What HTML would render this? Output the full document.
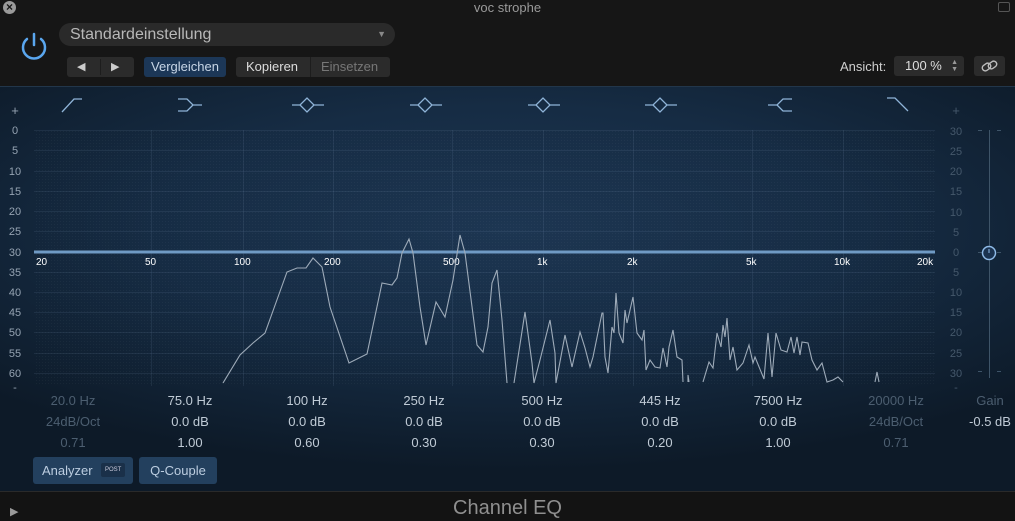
<!DOCTYPE html>
<html><head><meta charset="utf-8"><style>
*{margin:0;padding:0;box-sizing:border-box}
body{width:1015px;height:521px;overflow:hidden;background:#141414;font-family:"Liberation Sans",sans-serif;position:relative}
.abs{position:absolute}
.top{left:0;top:0;width:1015px;height:86px;background:#161616}
.title{left:0;top:0;width:1015px;text-align:center;color:#9a9a9a;font-size:13px;top:0}
.eq{left:0;top:86px;width:1015px;height:405px;background:radial-gradient(ellipse 70% 60% at 50% 35%,#1d3652 0%,#162c44 50%,#0d1a28 100%);border-top:1px solid #22364a}
.bot{left:0;top:491px;width:1015px;height:30px;background:#131313;border-top:1px solid #2a2a2a}
.btn{background:#2b2b2b;border-radius:3px;color:#ddd;font-size:13px;text-align:center;line-height:20px;height:20px}
.p{font-size:13px;color:#c0cbd6;text-align:center;width:90px}
.d{color:#4c5e70}
</style></head><body>
<div class="abs top"></div>
<div class="abs title">voc strophe</div>
<div class="abs" style="left:3px;top:1px;width:13px;height:13px;border-radius:50%;background:#9a9a9a;color:#161616;font-size:12px;line-height:13px;text-align:center;font-weight:bold">×</div>
<div class="abs" style="left:998px;top:2px;width:12px;height:10px;border:1px solid #555;border-radius:2px"></div>
<svg class="abs" style="left:18px;top:30px" width="32" height="32" viewBox="0 0 32 32"><path d="M9 9 A11 11 0 1 0 23 9" fill="none" stroke="#5aa6ee" stroke-width="2.5" stroke-linecap="round"/><line x1="16" y1="4" x2="16" y2="15" stroke="#5aa6ee" stroke-width="2.5" stroke-linecap="round"/></svg>
<div class="abs" style="left:59px;top:23px;width:336px;height:23px;border-radius:12px;background:#2a2a2a;color:#b8b8b8;font-size:16px;line-height:23px;padding-left:11px">Standardeinstellung<span style="position:absolute;right:9px;font-size:9px;color:#888">▼</span></div>
<div class="abs btn" style="left:67px;top:57px;width:67px;color:#ccc;font-size:11px"><span style="position:absolute;left:10px">◀</span><span style="position:absolute;left:33px;top:2px;height:16px;border-left:1px solid #1d1d1d"></span><span style="position:absolute;left:44px">▶</span></div>
<div class="abs btn" style="left:144px;top:57px;width:82px;background:#1c3757;color:#c8d6e6">Vergleichen</div>
<div class="abs btn" style="left:236px;top:57px;width:154px;text-align:left"><span style="padding-left:10px;color:#ddd">Kopieren</span><span style="position:absolute;left:74px;top:0;height:20px;border-left:1px solid #1d1d1d"></span><span style="position:absolute;left:85px;color:#777">Einsetzen</span></div>
<div class="abs" style="left:840px;top:59px;color:#cfcfcf;font-size:13px">Ansicht:</div>
<div class="abs btn" style="left:894px;top:56px;width:70px;text-align:left;padding-left:11px;color:#ddd">100 %<span style="position:absolute;right:6px;font-size:7px;line-height:7px;top:3px;color:#999">▲<br>▼</span></div>
<div class="abs btn" style="left:974px;top:56px;width:31px"><svg width="31" height="20" viewBox="0 0 31 20"><g fill="none" stroke="#bbb" stroke-width="1.4"><rect x="8" y="8" width="9" height="6" rx="3" transform="rotate(-35 12.5 11)"/><rect x="14" y="6" width="9" height="6" rx="3" transform="rotate(-35 18.5 9)"/></g></svg></div>
<div class="abs eq"></div>
<svg class="abs" style="left:0;top:86px" width="1015" height="405">
<defs><pattern id="g" width="3" height="3" patternUnits="userSpaceOnUse"><rect width="1" height="1" fill="rgba(255,255,255,0.035)"/></pattern></defs>
<rect x="34" y="44" width="901" height="256" fill="url(#g)"/>
<g stroke="rgba(130,160,190,0.12)" stroke-width="1">
<line x1="34" y1="44.5" x2="935" y2="44.5"/><line x1="34" y1="64.5" x2="935" y2="64.5"/><line x1="34" y1="85.5" x2="935" y2="85.5"/><line x1="34" y1="105.5" x2="935" y2="105.5"/><line x1="34" y1="125.5" x2="935" y2="125.5"/><line x1="34" y1="145.5" x2="935" y2="145.5"/><line x1="34" y1="186.5" x2="935" y2="186.5"/><line x1="34" y1="206.5" x2="935" y2="206.5"/><line x1="34" y1="226.5" x2="935" y2="226.5"/><line x1="34" y1="246.5" x2="935" y2="246.5"/><line x1="34" y1="267.5" x2="935" y2="267.5"/><line x1="34" y1="287.5" x2="935" y2="287.5"/>
<line x1="151.5" y1="44" x2="151.5" y2="300"/><line x1="243.5" y1="44" x2="243.5" y2="300"/><line x1="333.5" y1="44" x2="333.5" y2="300"/><line x1="452.5" y1="44" x2="452.5" y2="300"/><line x1="543.5" y1="44" x2="543.5" y2="300"/><line x1="633.5" y1="44" x2="633.5" y2="300"/><line x1="752.5" y1="44" x2="752.5" y2="300"/><line x1="843.5" y1="44" x2="843.5" y2="300"/>
</g>
<line x1="34" y1="166" x2="935" y2="166" stroke="#6f9ac4" stroke-width="3"/>
<g fill="#fff" font-size="10" font-family="Liberation Sans">
<text x="36" y="179">20</text><text x="145" y="179">50</text><text x="234" y="179">100</text><text x="324" y="179">200</text><text x="443" y="179">500</text><text x="537" y="179">1k</text><text x="627" y="179">2k</text><text x="746" y="179">5k</text><text x="834" y="179">10k</text><text x="917" y="179">20k</text></g>
<g fill="none" stroke="#9eabb9" stroke-width="1.1" transform="translate(0,-86)">
<polyline points="223,383 240,355 253,343 265,333 287,272 297,268 306,268 313,258 322,267 330,307 349,363 367,354 382,283 392,285 397,278 402,253 409,239 413,253 420,307 426,345 436,302 445,317 453,280 460,235 465,253 477,345 483,352 488,327 492,283 497,270 502,320 507,383"/>
<polyline points="514,383 525,312 532,363 534,383 540,360 550,320 555,353 556,383 565,335 572,367 580,332 585,348 590,367 593,357 602,313 603,313 605,357 608,373 612,327 614,333 616,293 619,333 623,343 625,310 627,323 633,297 637,333 642,340 644,330 646,370 650,360 655,367 660,368 663,348 667,367 669,347 673,330 677,357 682,360 683,382"/>
<polyline points="688,382 688,375 689,382"/>
<polyline points="703,382 709,362 713,368 717,333 721,347 723,325 725,337 727,318 730,360 733,347 737,370 743,363 749,345 753,363 755,357 764,379 768,333 772,377 776,333 781,350 787,352 791,337 794,353 797,337 800,355 802,342 808,343 812,360 817,370 822,363 827,382 833,380 838,377 843,382"/>
<polyline points="875,382 877,372 879,382"/>
</g>
<g fill="none" stroke="#8fb4d8" stroke-width="1.3">
<path d="M62 26 L74 13 L82 13"/>
<path d="M178 13 L187 13 L193 19 L202 19 M178 25 L187 25 L193 19"/>
<path d="M292 19 L300 19 L307 12 L314 19 L307 26 L300 19 M314 19 L324 19"/>
<path d="M410 19 L418 19 L425 12 L432 19 L425 26 L418 19 M432 19 L442 19"/>
<path d="M528 19 L536 19 L543 12 L550 19 L543 26 L536 19 M550 19 L560 19"/>
<path d="M645 19 L653 19 L660 12 L667 19 L660 26 L653 19 M667 19 L677 19"/>
<path d="M768 19 L777 19 L783 13 L792 13 M777 19 L783 25 L792 25"/>
<path d="M887 12 L895 12 L908 25"/>
</g>
<g fill="#95a3b2" font-size="11" font-family="Liberation Sans" text-anchor="middle">
<text x="15" y="29" font-size="13">+</text><text x="15" y="48">0</text><text x="15" y="68">5</text><text x="15" y="89">10</text><text x="15" y="109">15</text><text x="15" y="129">20</text><text x="15" y="149">25</text><text x="15" y="170">30</text><text x="15" y="190">35</text><text x="15" y="210">40</text><text x="15" y="230">45</text><text x="15" y="250">50</text><text x="15" y="271">55</text><text x="15" y="291">60</text><text x="15" y="305">-</text>
</g>
<g fill="#45586b" font-size="11" font-family="Liberation Sans" text-anchor="middle">
<text x="956" y="29" font-size="13">+</text><text x="956" y="49">30</text><text x="956" y="69">25</text><text x="956" y="89">20</text><text x="956" y="109">15</text><text x="956" y="130">10</text><text x="956" y="150">5</text><text x="956" y="170">0</text><text x="956" y="190">5</text><text x="956" y="210">10</text><text x="956" y="230">15</text><text x="956" y="250">20</text><text x="956" y="271">25</text><text x="956" y="291">30</text><text x="956" y="305">-</text>
</g>
<line x1="989.5" y1="44" x2="989.5" y2="292" stroke="#3e5468"/>
<g stroke="#3e5468"><line x1="978" y1="44.5" x2="982" y2="44.5"/><line x1="997" y1="44.5" x2="1001" y2="44.5"/><line x1="978" y1="166.5" x2="982" y2="166.5"/><line x1="997" y1="166.5" x2="1001" y2="166.5"/><line x1="978" y1="285.5" x2="982" y2="285.5"/><line x1="997" y1="285.5" x2="1001" y2="285.5"/></g>
<circle cx="989" cy="167" r="6.5" fill="#1b3350" stroke="#8fbbe8" stroke-width="1.5"/>
<line x1="989" y1="163" x2="989" y2="167" stroke="#8fbbe8"/>
</svg>
<div class="abs p d" style="left:28px;top:393px">20.0 Hz</div>
<div class="abs p d" style="left:18px;top:414px;width:110px">24dB/Oct</div>
<div class="abs p d" style="left:28px;top:435px">0.71</div>
<div class="abs p" style="left:145px;top:393px">75.0 Hz</div><div class="abs p" style="left:145px;top:414px">0.0 dB</div><div class="abs p" style="left:145px;top:435px">1.00</div>
<div class="abs p" style="left:262px;top:393px">100 Hz</div><div class="abs p" style="left:262px;top:414px">0.0 dB</div><div class="abs p" style="left:262px;top:435px">0.60</div>
<div class="abs p" style="left:379px;top:393px">250 Hz</div><div class="abs p" style="left:379px;top:414px">0.0 dB</div><div class="abs p" style="left:379px;top:435px">0.30</div>
<div class="abs p" style="left:497px;top:393px">500 Hz</div><div class="abs p" style="left:497px;top:414px">0.0 dB</div><div class="abs p" style="left:497px;top:435px">0.30</div>
<div class="abs p" style="left:615px;top:393px">445 Hz</div><div class="abs p" style="left:615px;top:414px">0.0 dB</div><div class="abs p" style="left:615px;top:435px">0.20</div>
<div class="abs p" style="left:733px;top:393px">7500 Hz</div><div class="abs p" style="left:733px;top:414px">0.0 dB</div><div class="abs p" style="left:733px;top:435px">1.00</div>
<div class="abs p d" style="left:851px;top:393px">20000 Hz</div>
<div class="abs p d" style="left:841px;top:414px;width:110px">24dB/Oct</div>
<div class="abs p d" style="left:851px;top:435px">0.71</div>
<div class="abs p d" style="left:945px;top:393px">Gain</div>
<div class="abs p" style="left:945px;top:414px">-0.5 dB</div>
<div class="abs" style="left:33px;top:457px;width:100px;height:27px;background:#23405e;border-radius:3px;color:#bccde0;font-size:13px;line-height:27px;padding-left:9px">Analyzer<span style="position:absolute;left:68px;top:6px;height:14px;line-height:14px;font-size:6px;background:#1a3049;padding:0 4px;border-radius:2px;color:#ccd">POST</span></div>
<div class="abs" style="left:139px;top:457px;width:78px;height:27px;background:#23405e;border-radius:3px;color:#bccde0;font-size:13px;line-height:27px;text-align:center">Q-Couple</div>
<div class="abs bot"></div>
<div class="abs" style="left:10px;top:505px;color:#9a9a9a;font-size:11px">▶</div>
<div class="abs" style="left:0;width:1015px;top:497px;text-align:center;color:#8f8f8f;font-size:20px">Channel EQ</div>
</body></html>
